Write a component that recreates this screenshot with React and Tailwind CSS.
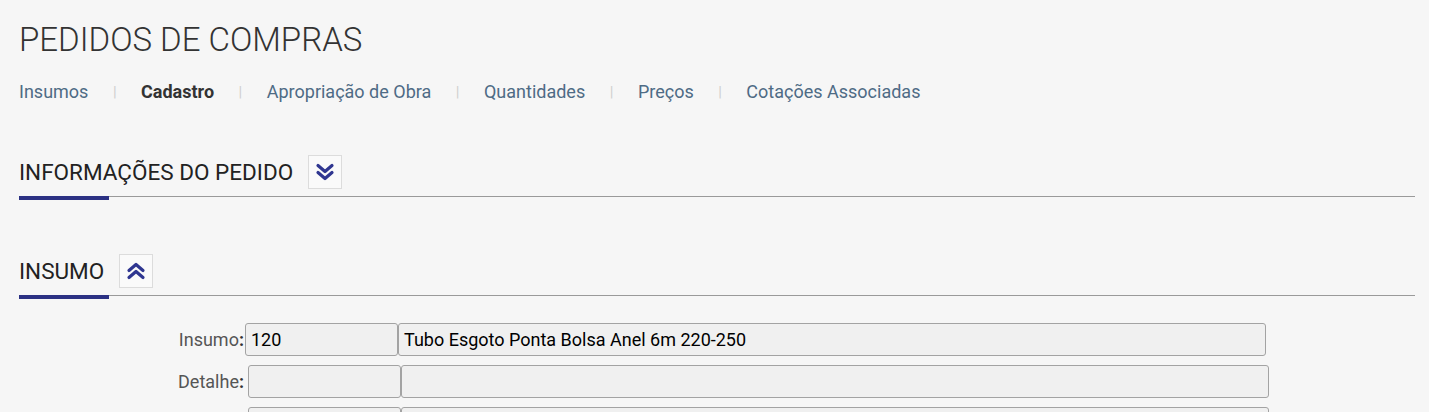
import React from "react";

const tabs = [
  { label: "Insumos" },
  { label: "Cadastro", active: true },
  { label: "Apropriação de Obra" },
  { label: "Quantidades" },
  { label: "Preços" },
  { label: "Cotações Associadas" },
];

const ChevronsDown = () => (
  <svg width="22" height="22" viewBox="0 0 22 22" fill="none">
    <path d="M4 4.5 L11 10.5 L18 4.5" stroke="#2f3690" strokeWidth="3.2" strokeLinecap="round" strokeLinejoin="round" />
    <path d="M4 11.5 L11 17.5 L18 11.5" stroke="#2f3690" strokeWidth="3.2" strokeLinecap="round" strokeLinejoin="round" />
  </svg>
);

const ChevronsUp = () => (
  <svg width="22" height="22" viewBox="0 0 22 22" fill="none">
    <path d="M4 10.5 L11 4.5 L18 10.5" stroke="#2f3690" strokeWidth="3.2" strokeLinecap="round" strokeLinejoin="round" />
    <path d="M4 17.5 L11 11.5 L18 17.5" stroke="#2f3690" strokeWidth="3.2" strokeLinecap="round" strokeLinejoin="round" />
  </svg>
);

const SectionHeader = ({ title, open }) => (
  <div className="relative border-b border-[#9a9a9a] pb-[7px]">
    <div className="flex items-center gap-[15px]">
      <h2 className="text-[22.5px] leading-[34px] text-[#222] uppercase">{title}</h2>
      <button
        type="button"
        className="w-[34px] h-[34px] flex items-center justify-center border border-[#dcdcdc] bg-[#fafafa]"
      >
        {open ? <ChevronsUp /> : <ChevronsDown />}
      </button>
    </div>
    <div className="absolute left-0 -bottom-[4px] w-[90px] h-[4px] bg-[#2b3183]" />
  </div>
);

const Field = ({ value }) => (
  <div className="h-[33px] border border-[#a3a3a3] rounded-[3px] bg-[#f0f0f0] px-[5px] flex items-center text-[18px] text-black">
    {value}
  </div>
);

const FormRow = ({ label, code, desc, offset }) => (
  <div className="flex items-center h-[33px]">
    <label className="w-[225px] text-right text-[18px] text-[#555]">
      {label}
      {label && <b className="text-[#333]">:</b>}
    </label>
    <div className={`flex ${offset ? "ml-[4px]" : "ml-[1px]"}`}>
      <div className="w-[153px]">
        <Field value={code} />
      </div>
      <div className="w-[868px]">
        <Field value={desc} />
      </div>
    </div>
  </div>
);

export default function App() {
  return (
    <div
      className="min-h-screen bg-[#f6f6f6] pl-[19px] pr-[14px] pt-[21px]"
      style={{ fontFamily: "Roboto, 'Liberation Sans', sans-serif" }}
    >
      {/* TITLE */}
      <h1 className="text-[33px] font-light leading-[38px] text-[#333]">
        PEDIDOS DE COMPRAS
      </h1>

      {/* TABS */}
      <nav className="flex items-center mt-[23px] text-[18px] leading-[20px]">
        {tabs.map((t, i) => (
          <React.Fragment key={t.label}>
            {i > 0 && <span className="mx-[24.5px] text-[#cfcfcf] text-[15px]">|</span>}
            <span className={t.active ? "font-bold text-[#333]" : "text-[#4e6b85]"}>
              {t.label}
            </span>
          </React.Fragment>
        ))}
      </nav>

      {/* INFORMACOES DO PEDIDO */}
      <div className="mt-[53px]">
        <SectionHeader title="Informações do Pedido" />
      </div>

      {/* INSUMO */}
      <div className="mt-[57px]">
        <SectionHeader title="Insumo" open />
      </div>

      {/* FORM */}
      <div className="mt-[27px] flex flex-col gap-[9px]">
        <FormRow label="Insumo" code="120" desc="Tubo Esgoto Ponta Bolsa Anel 6m 220-250" />
        <FormRow label="Detalhe" code="" desc="" offset />
        <FormRow label="" code="" desc="" offset />
      </div>
    </div>
  );
}
